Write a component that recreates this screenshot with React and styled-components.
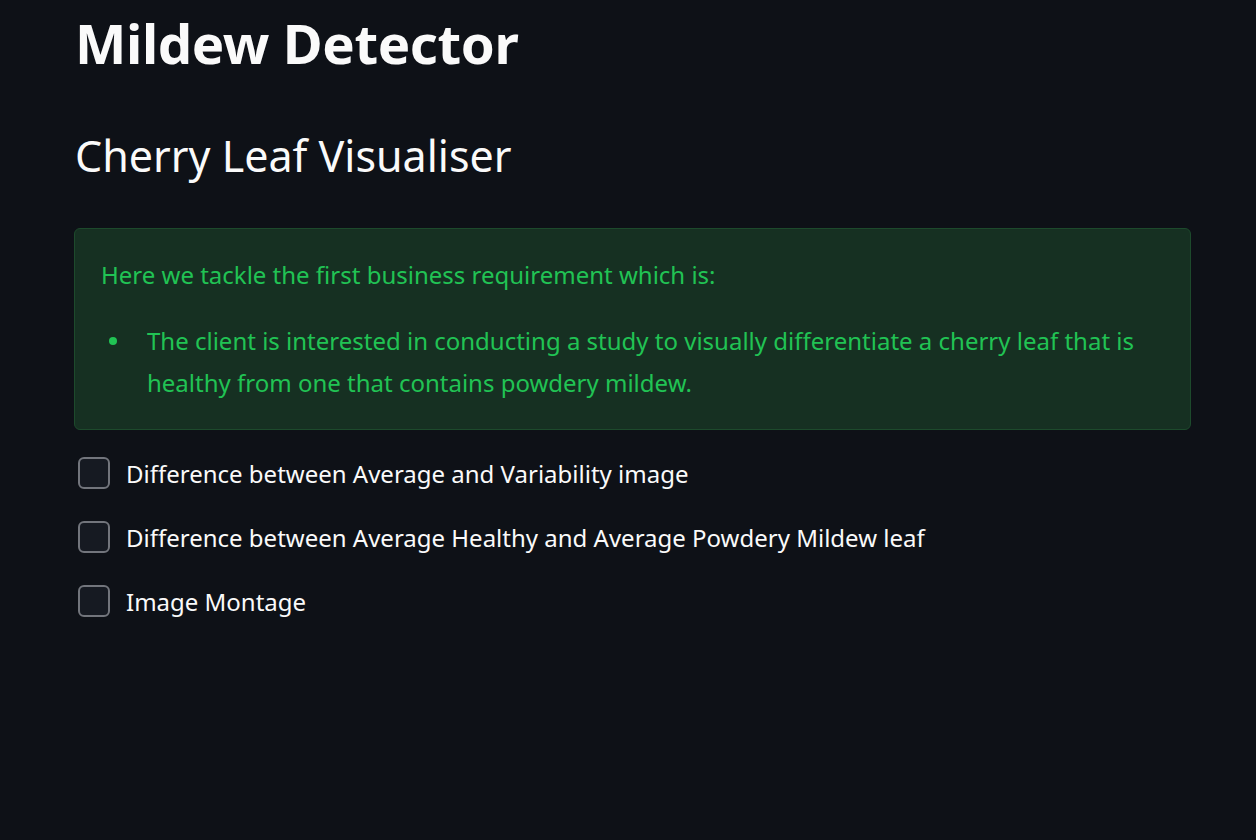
import React from "react";
import styled, { createGlobalStyle } from "styled-components";

const GlobalStyle = createGlobalStyle`
  html, body {
    margin: 0;
    padding: 0;
    background-color: #0e1117;
  }
  body {
    font-family: "Noto Sans", "Open Sans", sans-serif;
    color: #fafafa;
  }
`;

const checks = [
  "Difference between Average and Variability image",
  "Difference between Average Healthy and Average Powdery Mildew leaf",
  "Image Montage",
];

function App() {
  return (
    <StPage>
      <GlobalStyle />
      <StTitle>Mildew Detector</StTitle>
      <StSubtitle>Cherry Leaf Visualiser</StSubtitle>
      <StSuccessBox>
        <StBoxText>Here we tackle the first business requirement which is:</StBoxText>
        <StList>
          <li>
            The client is interested in conducting a study to visually differentiate a cherry leaf that is
            healthy from one that contains powdery mildew.
          </li>
        </StList>
      </StSuccessBox>
      <StChecks>
        {checks.map((label) => (
          <StCheckRow key={label}>
            <StCheckBox />
            <span>{label}</span>
          </StCheckRow>
        ))}
      </StChecks>
    </StPage>
  );
}

export default App;

const StPage = styled.div`
  width: 1116px;
  min-height: 840px;
  box-sizing: border-box;
  padding: 9px 0 0 74px;
`;

const StTitle = styled.h1`
  margin: 0;
  padding-left: 1px;
  font-size: 54.5px;
  font-weight: 700;
  line-height: 68px;
  letter-spacing: -0.4px;
`;

const StSubtitle = styled.h2`
  margin: 53px 0 0;
  padding-left: 1px;
  font-size: 43px;
  font-weight: 400;
  line-height: 52px;
`;

const StSuccessBox = styled.div`
  margin-top: 46px;
  box-sizing: border-box;
  width: 1117px;
  padding: 25px 26px 25px 26px;
  background-color: #163022;
  border: 1px solid #1d4a2c;
  border-radius: 6px;
  color: #21c354;
  font-size: 24px;
  line-height: 42px;
`;

const StBoxText = styled.p`
  margin: 0;
`;

const StList = styled.ul`
  margin: 24px 0 0;
  padding-left: 46px;
  list-style: none;

  li {
    position: relative;
  }

  li::before {
    content: "";
    position: absolute;
    left: -38px;
    top: 17px;
    width: 8px;
    height: 8px;
    border-radius: 50%;
    background-color: #21c354;
  }
`;

const StChecks = styled.div`
  display: flex;
  flex-direction: column;
  gap: 22px;
  margin-top: 22px;
`;

const StCheckRow = styled.label`
  display: flex;
  align-items: center;
  gap: 16px;
  height: 42px;
  padding-left: 4px;
  font-size: 24px;
  color: #fafafa;
`;

const StCheckBox = styled.span`
  width: 28px;
  height: 28px;
  border: 2px solid #72757c;
  border-radius: 6px;
  background-color: #161a22;
  flex-shrink: 0;
`;
